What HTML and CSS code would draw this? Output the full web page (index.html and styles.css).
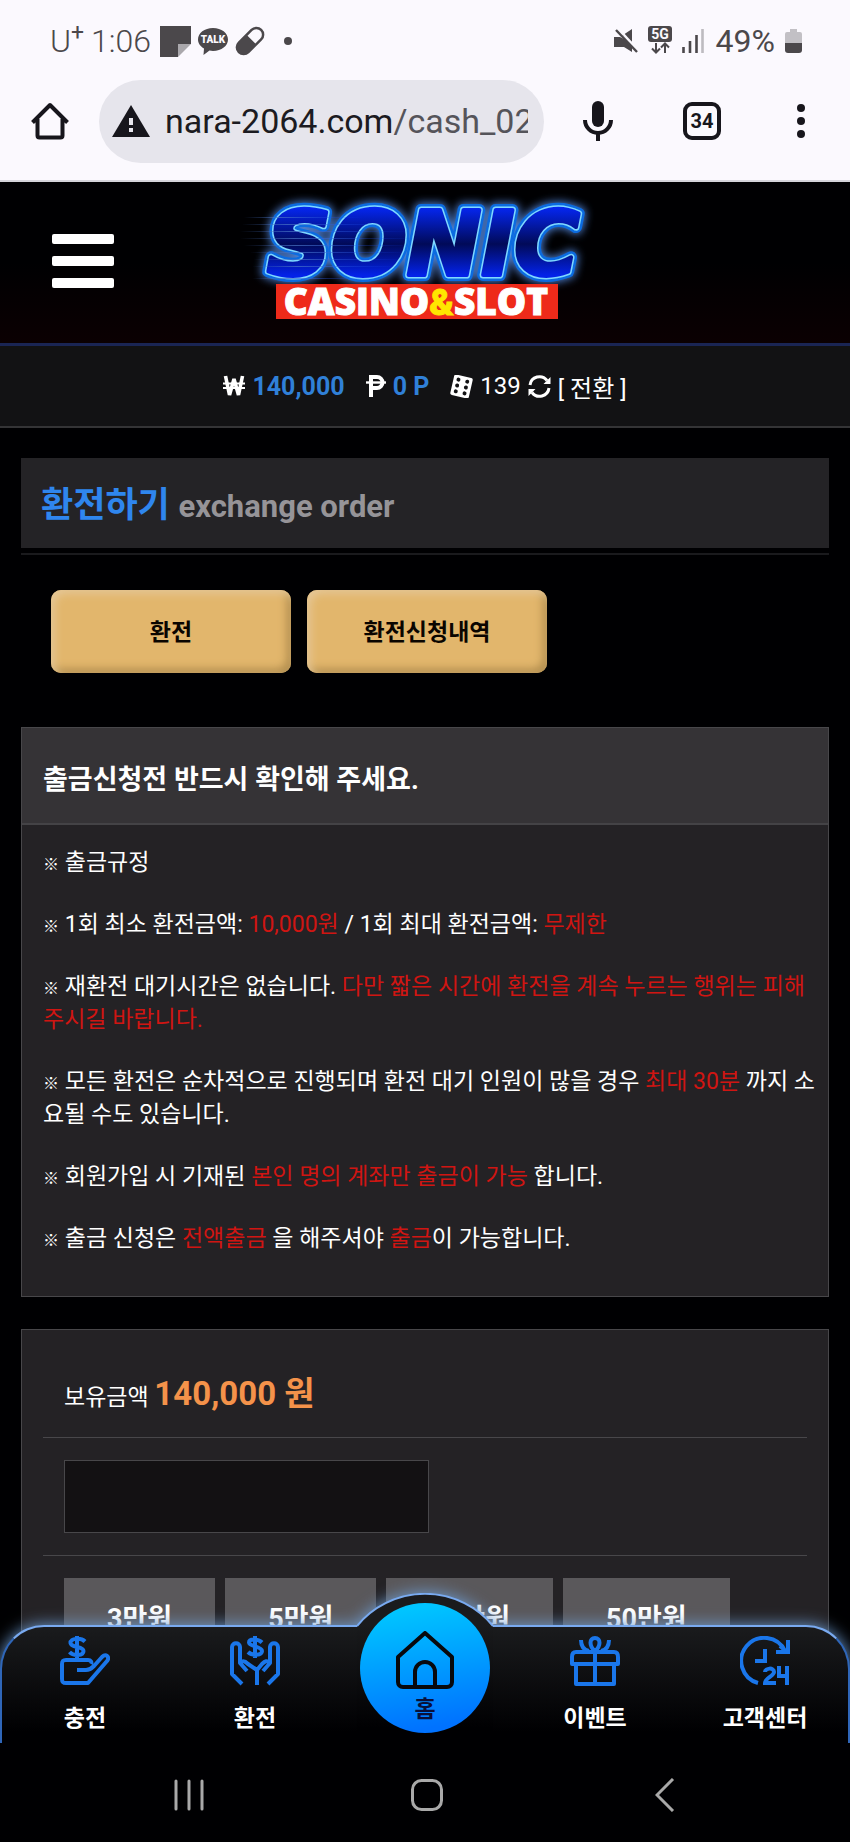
FILE: index.html
```
<!DOCTYPE html>
<html lang="ko">
  <head>
    <meta charset="UTF-8" />
    <meta name="viewport" content="width=device-width, initial-scale=1.0" />
    <title>환전하기</title>
    <!-- Stylesheet -->
    <link rel="stylesheet" href="styles.css" />
  </head>
  <body>
    <!-- Status bar -->
    <div class="status-bar">
      <div class="status-left">
        <span class="carrier">U<sup>+</sup></span>
        <span class="clock">1:06</span>
        <svg width="31" height="31" viewBox="0 0 31 31">
          <path fill="#4b484b" d="M0 0h31v18H18v13H0z" />
          <path fill="#aaa8ac" d="M18 18h13L18 31z" />
        </svg>
        <svg width="30" height="30" viewBox="0 0 30 30">
          <path fill="#4b484b" d="M15 2C6.500 2 0 7 0 13.500c0 4 2.500 7 6 9L5.500 29l6-4.500c1 .3 2.300.4 3.500.4 8.500 0 15-5 15-11.400S23.500 2 15 2z" />
          <text class="talk" x="15" y="17" text-anchor="middle">TALK</text>
        </svg>
        <svg width="30" height="30" viewBox="0 0 30 30">
          <g transform="rotate(-45 15 15)">
            <rect x="-2" y="7" width="34" height="16" rx="8" fill="#4b484b" />
            <path fill="#fbf9fe" d="M17 9.500h7a5.500 5.500 0 0 1 0 11h-7z" />
          </g>
        </svg>
        <i class="more-dot"></i>
      </div>
      <div class="status-right">
        <svg width="24" height="26" viewBox="0 0 24 26">
          <path fill="#4b484b" d="M0 9h6l4 2 8 8v5l-8-5H0zM9 7l9-6v13z" />
          <path stroke="#fbf9fe" stroke-width="2" d="M4 0l20 22" />
          <path stroke="#4b484b" stroke-width="2.400" d="M2 2l21 22" />
        </svg>
        <svg width="24" height="30" viewBox="0 0 24 30">
          <rect width="24" height="16" rx="3" fill="#4b484b" />
          <text class="five-g" x="12" y="13" text-anchor="middle">5G</text>
          <path fill="none" stroke="#4b484b" stroke-width="2" d="M8 17v9M4 22.500l4 4 4-4M17 27v-9M13 21.500l4-4 4 4" />
        </svg>
        <svg width="22" height="24" viewBox="0 0 22 24">
          <path stroke="#4b484b" stroke-width="2.600" d="M1.500 18v6M8 12v12M14.500 6v18" />
          <path stroke="#bdbbc0" stroke-width="2.600" d="M20.500 0v24" />
        </svg>
        <span class="battery-text">49%</span>
        <svg width="17" height="24" viewBox="0 0 17 24">
          <path fill="#c2c0c5" d="M5 0h7v3h3a2 2 0 0 1 2 2v9H0V5a2 2 0 0 1 2-2h3z" />
          <path fill="#4b484b" d="M0 14h17v7a3 3 0 0 1-3 3H3a3 3 0 0 1-3-3z" />
        </svg>
      </div>
    </div>

    <!-- Browser bar -->
    <div class="browser-bar">
      <button class="icon-btn" aria-label="Home">
        <svg width="38" height="38" viewBox="0 0 38 38" fill="none" stroke="#17161c" stroke-width="4" stroke-linejoin="round">
          <path d="M1.500 20.500L19 3l17.500 17.500M6.500 17v16.500a2 2 0 0 0 2 2h21a2 2 0 0 0 2-2V17" />
        </svg>
      </button>
      <div class="url-box">
        <svg width="38" height="32" viewBox="0 0 38 32">
          <path fill="#17161c" d="M19 0l19 32H0z" />
          <path stroke="#e6e5ec" stroke-width="4" d="M19 13v7M19 23v4" />
        </svg>
        <span class="url">nara-2064.com<span>/cash_02</span></span>
      </div>
      <button class="icon-btn" aria-label="Voice">
        <svg width="30" height="40" viewBox="0 0 30 40">
          <rect x="9" y="0" width="12" height="26" rx="6" fill="#17161c" />
          <path fill="none" stroke="#17161c" stroke-width="4" d="M2 19a13 13 0 0 0 26 0M15 32v8" />
        </svg>
      </button>
      <button class="tabs-btn">34</button>
      <button class="icon-btn" aria-label="Menu">
        <svg width="8" height="34" viewBox="0 0 8 34" fill="#17161c">
          <circle cx="4" cy="4" r="4" />
          <circle cx="4" cy="17" r="4" />
          <circle cx="4" cy="30" r="4" />
        </svg>
      </button>
    </div>

    <!-- Site -->
    <div class="site">
      <header class="header">
        <button class="menu-btn" aria-label="메뉴">
          <i></i>
          <i></i>
          <i></i>
        </button>
        <a href="#" class="logo" aria-label="SONIC CASINO&amp;SLOT">
          <svg width="410" height="140" viewBox="220 190 410 140">
            <defs>
              <linearGradient id="logo-fill" x1="0" y1="0" x2="0" y2="1">
                <stop offset="0.15" stop-color="#0526f0" />
                <stop offset="0.5" stop-color="#010a58" />
                <stop offset="0.8" stop-color="#0322e8" />
              </linearGradient>
              <linearGradient id="speed" x1="0" x2="1">
                <stop offset="0" stop-color="#3f66b5" stop-opacity="0" />
                <stop offset="0.3" stop-color="#4b75c4" stop-opacity="0.7" />
                <stop offset="1" stop-color="#0b3cff" stop-opacity="0" />
              </linearGradient>
              <filter id="glow" x="-10%" y="-30%" width="120%" height="160%">
                <feGaussianBlur stdDeviation="4" />
              </filter>
            </defs>
            <g class="logo-sonic">
              <text class="logo-halo" x="267" y="274" filter="url(#glow)">SONIC</text>
              <text class="logo-edge" x="267" y="274">SONIC</text>
              <text class="logo-line" x="267" y="274">SONIC</text>
              <text class="logo-face" x="267" y="274">SONIC</text>
            </g>
            <g fill="url(#speed)">
              <rect x="244" y="216" width="120" height="1" />
              <rect x="242" y="223" width="150" height="1" />
              <rect x="240" y="230" width="170" height="1" />
              <rect x="240" y="237" width="180" height="1" />
              <rect x="244" y="244" width="170" height="1" />
              <rect x="250" y="251" width="160" height="1" />
              <rect x="254" y="258" width="150" height="1" />
              <rect x="252" y="265" width="150" height="1" />
              <rect x="252" y="277" width="120" height="1" />
            </g>
            <rect x="276" y="283" width="282" height="35" fill="#ee2a1a" />
            <text class="logo-sub" x="416" y="314" text-anchor="middle">CASINO<tspan class="amp">&amp;</tspan>SLOT</text>
          </svg>
        </a>
      </header>

      <div class="wallet">
        <svg width="22" height="22" viewBox="0 0 22 22" fill="none" stroke="#fff">
          <path stroke-width="3.600" stroke-linejoin="bevel" d="M2.500 1l4 19L11 4l4.500 16 4-19" />
          <path stroke-width="2" d="M0 8.500h22M0 13h22" />
        </svg>
        <b>140,000</b>
        <svg class="point" width="20" height="22" viewBox="0 0 20 22" fill="none" stroke="#fff">
          <path stroke-width="4" d="M5 22V2h6a5 5 0 0 1 0 11H5" />
          <path stroke-width="2.400" d="M0 7.500h20" />
        </svg>
        <b>0 P</b>
        <svg class="dice" width="23" height="23" viewBox="0 0 23 23">
          <g transform="rotate(13 11.500 11.500)">
            <rect x="2" y="1" width="19" height="21" rx="2" fill="#fff" />
            <g fill="#121214">
              <circle cx="7" cy="5.500" r="2" />
              <circle cx="7" cy="11.500" r="2" />
              <circle cx="7" cy="17.500" r="2" />
              <circle cx="16" cy="5.500" r="2" />
              <circle cx="16" cy="11.500" r="2" />
              <circle cx="16" cy="17.500" r="2" />
            </g>
          </g>
        </svg>
        <span>139</span>
        <svg width="23" height="23" viewBox="0 0 23 23">
          <path fill="none" stroke="#fff" stroke-width="3" d="M2 10a9.500 9.500 0 0 1 17-4.500M21 13a9.500 9.500 0 0 1-17 4.500" />
          <path fill="#fff" d="M22.500 2v7h-7zM.5 21v-7h7z" />
        </svg>
        <a href="#">[ 전환 ]</a>
      </div>

      <main class="content">
        <h1 class="page-title">환전하기 <small>exchange order</small></h1>

        <div class="tab-buttons">
          <button>환전</button>
          <button>환전신청내역</button>
        </div>

        <section class="notice">
          <h2>출금신청전 반드시 확인해 주세요.</h2>
          <div class="notice-body">
            <p><i>※</i> 출금규정</p>
            <p><i>※</i> 1회 최소 환전금액: <em>10,000원</em> / 1회 최대 환전금액: <em>무제한</em></p>
            <p><i>※</i> 재환전 대기시간은 없습니다. <em>다만 짧은 시간에 환전을 계속 누르는 행위는 피해주시길 바랍니다.</em></p>
            <p><i>※</i> 모든 환전은 순차적으로 진행되며 환전 대기 인원이 많을 경우 <em>최대 30분</em> 까지 소요될 수도 있습니다.</p>
            <p><i>※</i> 회원가입 시 기재된 <em>본인 명의 계좌만 출금이 가능</em> 합니다.</p>
            <p><i>※</i> 출금 신청은 <em>전액출금</em> 을 해주셔야 <em>출금</em>이 가능합니다.</p>
          </div>
        </section>

        <form class="order">
          <div class="row balance">
            <label for="amount">보유금액</label>
            <strong>140,000 원</strong>
          </div>
          <div class="row">
            <input type="text" id="amount" />
          </div>
          <div class="row amounts">
            <button type="button">3만원</button>
            <button type="button">5만원</button>
            <button type="button">10만원</button>
            <button type="button">50만원</button>
          </div>
        </form>
      </main>

      <!-- Bottom menu -->
      <nav class="bottom-nav">
        <div class="nav-bg">
          <div class="nav-side left"></div>
          <svg width="136" height="150" viewBox="0 0 136 150">
            <defs>
              <linearGradient id="nav-fill" x1="0" y1="0" x2="0" y2="1">
                <stop offset="0.2" stop-color="#1a1b1d" />
                <stop offset="0.9" stop-color="#000002" />
              </linearGradient>
            </defs>
            <path fill="url(#nav-fill)" d="M0 33A88 88 0 0 1 136 33V150H0z" />
            <path fill="none" stroke="#79aaf0" stroke-width="2" d="M0 33A88 88 0 0 1 136 33" />
          </svg>
          <div class="nav-side right"></div>
        </div>
        <a href="#">
          <svg width="50" height="50" viewBox="0 0 50 50" fill="none" stroke="#1a76ea" stroke-width="4" stroke-linejoin="round">
            <path d="M25 5.500C21 1.500 10 2 10.500 7s13 3 13 8-10 5.500-14 1M17 0v24" />
            <path d="M17 34h9c4 0 6-2 8-4l8-9c4-4 8 0 5 4L28 47H6c-3 0-4-1-4-4V28c0-3 1-4 4-4h22c3 0 4 2 3 4" />
          </svg>
          충전
        </a>
        <a href="#">
          <svg width="50" height="50" viewBox="0 0 50 50" fill="none" stroke="#1a76ea" stroke-width="4" stroke-linejoin="round">
            <path d="M32 6.500c-4-4-13-4-13 0s13 4 13 8.500-10 5-14 1M25 0v22" />
            <path d="M12 48L2 38V11c0-5 8-5 8 0v16l7 8M10 27c3-3 5-2 8 1l9 6v15M38 48l10-10V11c0-5-8-5-8 0v16l-7 8M40 27c-3-3-5-2-8 1l-5 6" />
          </svg>
          환전
        </a>
        <a href="#" class="home">
          <svg width="58" height="58" viewBox="0 0 58 58" fill="none" stroke="#08090d" stroke-width="4" stroke-linejoin="round">
            <path d="M2 26L29 2l27 24v25c0 3-2 5-5 5H7c-3 0-5-2-5-5z" />
            <path d="M19 56V41a10 10 0 0 1 20 0v15" />
          </svg>
          홈
        </a>
        <a href="#">
          <svg width="50" height="50" viewBox="0 0 50 50" fill="none" stroke="#1a76ea" stroke-width="4" stroke-linejoin="round">
            <path d="M6 28v20h38V28M25 16v32M2 28v-7c0-3 1-5 4-5h38c3 0 4 2 4 5v7z" />
            <path d="M25 15c-6-5-6-13 0-13s6 8 0 13M19 15c-5-1-8-5-8-11M31 15c5-1 8-5 8-11" />
          </svg>
          이벤트
        </a>
        <a href="#">
          <svg width="50" height="50" viewBox="0 0 50 50" fill="none" stroke="#1a76ea" stroke-width="4">
            <path d="M18 47A23 23 0 1 1 45 15M48 4v12H36M40 10l7 6" />
            <path d="M25 13v12H15" />
            <path d="M25 36c0-4 9-5 9 0 0 4-9 6-9 11h11M39 30v10h9M47 30v19" />
          </svg>
          고객센터
        </a>
      </nav>
    </div>

    <!-- System buttons -->
    <div class="system-bar">
      <svg width="30" height="32" viewBox="0 0 30 32" stroke="#a9a9a9" stroke-width="3" stroke-linecap="round">
        <path d="M2 2v28M15 2v28M28 2v28" />
      </svg>
      <svg width="32" height="32" viewBox="0 0 32 32" fill="none" stroke="#a9a9a9" stroke-width="3">
        <rect x="1.500" y="1.500" width="29" height="29" rx="9" />
      </svg>
      <svg width="20" height="34" viewBox="0 0 20 34" fill="none" stroke="#a9a9a9" stroke-width="3">
        <path d="M18 1L2 17l16 16" />
      </svg>
    </div>
  </body>
</html>
```

FILE: styles.css
```
* {
  padding: 0;
  margin: 0;
  box-sizing: border-box;
  font-family: Roboto, "Noto Sans CJK KR", sans-serif;
}
body {
  height: 100vh;
  display: flex;
  flex-direction: column;
  overflow: hidden;
  background-color: #000002;
  color: #ffffff;
  font-size: 23px;
}
button {
  border: none;
  background: none;
}
a {
  color: inherit;
  text-decoration: none;
}
svg {
  display: block;
  flex-shrink: 0;
}

/* status bar */
.status-bar {
  display: flex;
  justify-content: space-between;
  align-items: center;
  height: 80px;
  padding: 2px 48px 0 50px;
  background-color: #fbf9fe;
  color: #4b484b;
  font-size: 32px;
}
.status-left,
.status-right {
  display: flex;
  align-items: center;
  gap: 7px;
}
.carrier {
  font-weight: 300;
  line-height: 31px;
}
.carrier sup {
  font-size: 23px;
  font-weight: 400;
  line-height: 0;
}
.clock {
  padding-right: 2px;
  font-weight: 300;
}
.talk {
  font-size: 10px;
  font-weight: 900;
  fill: #fbf9fe;
}
.more-dot {
  width: 8px;
  height: 8px;
  margin-left: 12px;
  border-radius: 50%;
  background-color: #4b484b;
}
.status-right {
  gap: 10px;
}
.five-g {
  font-size: 14px;
  font-weight: 700;
  fill: #fbf9fe;
}
.battery-text {
  padding-left: 2px;
}

/* browser bar */
.browser-bar {
  display: flex;
  align-items: center;
  height: 102px;
  padding: 0 45px 18px 31px;
  background-color: #fbf9fe;
  border-bottom: 2px solid #d5d4da;
}
.url-box {
  flex: 1;
  min-width: 0;
  display: flex;
  align-items: center;
  gap: 15px;
  height: 83px;
  margin: 0 39px 0 30px;
  padding: 0 16px 0 13px;
  border-radius: 42px;
  background-color: #e6e5ec;
}
.url {
  overflow: hidden;
  white-space: nowrap;
  font-size: 34px;
  color: #1c1b21;
}
.url span {
  color: #55545a;
}
.tabs-btn {
  width: 38px;
  height: 38px;
  margin: 0 76px 0 70px;
  border: 4px solid #17161c;
  border-radius: 9px;
  font-size: 20px;
  font-weight: 700;
  color: #17161c;
}

/* site */
.site {
  position: relative;
  flex: 1;
  min-height: 0;
  overflow: hidden;
}
.header {
  display: grid;
  grid-template-columns: 1fr auto 1fr;
  align-items: center;
  height: 164px;
  padding: 0 52px 4px;
  background: linear-gradient(#000002 50%, #0b0002);
  border-bottom: 3px solid #1a2554;
}
.menu-btn {
  width: 62px;
  display: grid;
  gap: 12px;
}
.menu-btn i {
  height: 10px;
  border-radius: 2px;
  background-color: #ffffff;
}
.logo-sonic text {
  font-family: "DejaVu Sans", sans-serif;
  font-size: 89px;
  font-weight: 700;
  font-style: italic;
  stroke-linejoin: round;
}
.logo-halo {
  fill: #4d7fd0;
  stroke: #4d7fd0;
  stroke-width: 14px;
}
.logo-edge {
  fill: #0b6be0;
  stroke: #0b6be0;
  stroke-width: 12px;
}
.logo-line {
  fill: #7fd8ff;
  stroke: #7fd8ff;
  stroke-width: 7px;
}
.logo-face {
  fill: url(#logo-fill);
  stroke: url(#logo-fill);
  stroke-width: 4px;
}
.logo-sub {
  font-family: "Open Sans", sans-serif;
  font-size: 37px;
  font-weight: 800;
  fill: #ffffff;
  stroke: #ffffff;
}
.logo-sub .amp {
  fill: #ffe600;
  stroke: #ffe600;
}
.wallet {
  display: flex;
  justify-content: center;
  align-items: center;
  gap: 7px;
  height: 82px;
  background-color: #121214;
  border-bottom: 2px solid #343436;
  font-size: 24px;
}
.wallet b {
  font-size: 25px;
  color: #3080d8;
}
.wallet .point,
.wallet .dice {
  margin-left: 14px;
}
.content {
  padding: 30px 21px 0;
}
.page-title {
  height: 90px;
  padding: 8px 0 0 20px;
  background-color: #242326;
  box-shadow: 0 5px #000002, 0 7px #1a1a1d;
  font-size: 35px;
  line-height: 80px;
  color: #2f86ee;
}
.page-title small {
  font-size: 31px;
  color: #969498;
}
.tab-buttons {
  display: flex;
  gap: 16px;
  padding: 42px 30px 54px;
}
.tab-buttons button {
  width: 240px;
  height: 83px;
  padding-bottom: 4px;
  border-radius: 10px;
  background-color: #e2b66c;
  box-shadow: inset 4px 4px 8px #e6c796, inset -4px -4px 8px #b08c4d;
  font-size: 23px;
  font-weight: 700;
  color: #0a0500;
}

/* notice */
.notice,
.order {
  background-color: #242225;
  border: 1px solid #48474a;
}
.notice h2 {
  padding: 10px 0 0 21px;
  background-color: #353336;
  border-bottom: 2px solid #444346;
  font-size: 27px;
  line-height: 85px;
}
.notice-body {
  padding: 21px 10px 12px 21px;
}
.notice p {
  margin-bottom: 29px;
  line-height: 33px;
}
.notice i {
  font-size: 16px;
  font-style: normal;
  font-weight: 700;
  line-height: 16px;
}
.notice em {
  font-style: normal;
  color: #d01512;
}

/* order form */
.order {
  margin-top: 32px;
  padding: 22px 21px 40px;
}
.row {
  padding: 22px 21px;
  border-bottom: 1px solid #48474a;
}
.row:last-child {
  border-bottom: none;
}
.balance {
  height: 86px;
  padding: 0 21px;
  line-height: 84px;
}
.balance strong {
  font-size: 33px;
  color: #f4924a;
}
.row input {
  display: block;
  width: 365px;
  height: 73px;
  padding: 0 16px;
  border: 1px solid #48474a;
  background-color: #131113;
  color: #ffffff;
  font-size: 23px;
}
.amounts {
  display: flex;
  gap: 10px;
}
.amounts button {
  height: 76px;
  padding: 0 43px;
  background-color: #5a585b;
  font-size: 27px;
  font-weight: 700;
  color: #ffffff;
  white-space: nowrap;
}

/* bottom menu */
.bottom-nav {
  position: absolute;
  left: 0;
  right: 0;
  bottom: 0;
  display: flex;
  height: 118px;
}
.nav-bg {
  position: absolute;
  left: 0;
  right: 0;
  bottom: 0;
  display: flex;
  align-items: flex-end;
  filter: drop-shadow(0 0 8px #6d9bd0);
}
.nav-side {
  flex: 1;
  height: 118px;
  border-top: 2px solid #79aaf0;
  background: linear-gradient(#1a1b1d, #000002 90%);
}
.nav-side.left {
  border-left: 2px solid #2f66b8;
  border-top-left-radius: 44px;
}
.nav-side.right {
  border-right: 2px solid #2f66b8;
  border-top-right-radius: 44px;
}
.bottom-nav a {
  position: relative;
  flex: 1;
  display: flex;
  flex-direction: column;
  align-items: center;
  gap: 16px;
  padding-top: 11px;
  font-weight: 700;
  line-height: 34px;
}
.bottom-nav .home {
  flex: none;
  width: 130px;
  height: 130px;
  margin: -22px 20px 0;
  padding-top: 28px;
  gap: 4px;
  border-radius: 50%;
  background: linear-gradient(170deg, #00c4ff 10%, #0072ff 90%);
  color: #08103a;
}

/* system buttons */
.system-bar {
  display: grid;
  grid-template-columns: repeat(3, 1fr);
  place-items: center;
  height: 99px;
  padding: 5px 66px 0 70px;
  background-color: #000002;
}
```
